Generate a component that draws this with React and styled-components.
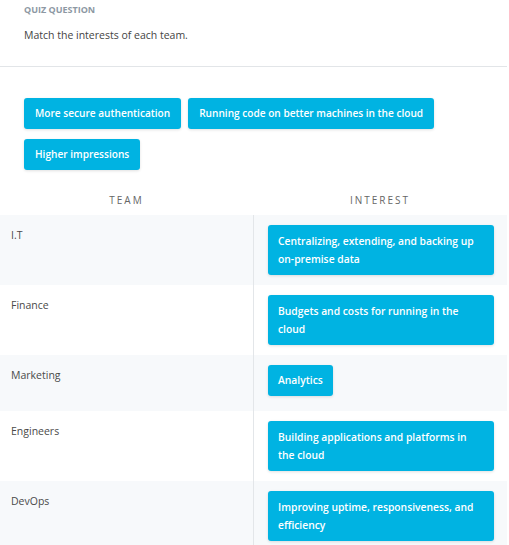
import React from 'react';
import styled, { createGlobalStyle } from 'styled-components';

const Global = createGlobalStyle`
  body {
    margin: 0;
    background: #fff;
    font-family: "Open Sans", "Noto Sans", sans-serif;
    color: #444;
  }
`;

const Page = styled.div`
  width: 507px;
`;

const Intro = styled.div`
  height: 67px;
  padding: 4px 24px 0;
  box-sizing: border-box;
  border-bottom: 1px solid #e2e5e8;
`;

const Label = styled.div`
  font-size: 9px;
  font-weight: 700;
  color: #8d98a3;
  line-height: 12px;
`;

const Question = styled.div`
  margin-top: 12px;
  font-size: 10.5px;
  line-height: 14px;
  color: #444;
`;

const Options = styled.div`
  display: flex;
  flex-wrap: wrap;
  gap: 10px 7px;
  padding: 31px 24px 0;
`;

const Chip = styled.div`
  background: #00b3e2;
  color: #fff;
  font-size: 10.1px;
  font-weight: 600;
  line-height: 19px;
  padding: 6px 11px;
  border-radius: 3px;
  box-shadow: 0 1px 3px rgba(0, 0, 0, 0.12);
`;

const HeadRow = styled.div`
  display: grid;
  grid-template-columns: 253px 1fr;
  margin-top: 15px;
  height: 30px;
  align-items: center;
`;

const HeadCell = styled.div`
  text-align: center;
  font-size: 10px;
  letter-spacing: 2px;
  color: #666;
`;

const Row = styled.div`
  display: grid;
  grid-template-columns: 253px 1fr;
  background: ${(p) => (p.$shaded ? '#f7f9fb' : '#fff')};
`;

const TeamCell = styled.div`
  padding: 11px 11px 10px;
  font-size: 10.5px;
  line-height: 18px;
  color: #4a4a4a;
`;

const Slot = styled.div`
  border-left: 1px solid #e3e6e9;
  padding: 10px 13px 10px 14px;
  min-height: 36px;
`;

const SlotChip = styled(Chip)`
  display: ${(p) => (p.$wide ? 'block' : 'inline-block')};
  font-size: 10.3px;
  line-height: 18px;
  padding: ${(p) => (p.$wide ? '7px 10px' : '6px 10px 7px')};
`;

const options = [
  'More secure authentication',
  'Running code on better machines in the cloud',
  'Higher impressions',
];

const rows = [
  { team: 'I.T', interest: 'Centralizing, extending, and backing up on-premise data' },
  { team: 'Finance', interest: 'Budgets and costs for running in the cloud' },
  { team: 'Marketing', interest: 'Analytics', short: true },
  { team: 'Engineers', interest: 'Building applications and platforms in the cloud' },
  { team: 'DevOps', interest: 'Improving uptime, responsiveness, and efficiency' },
];

export default function App() {
  return (
    <Page>
      <Global />
      <Intro>
        <Label>QUIZ QUESTION</Label>
        <Question>Match the interests of each team.</Question>
      </Intro>
      <Options>
        {options.map((o) => (
          <Chip key={o}>{o}</Chip>
        ))}
      </Options>
      <HeadRow>
        <HeadCell>TEAM</HeadCell>
        <HeadCell>INTEREST</HeadCell>
      </HeadRow>
      {rows.map((r, i) => (
        <Row key={r.team} $shaded={i % 2 === 0}>
          <TeamCell>{r.team}</TeamCell>
          <Slot>
            <SlotChip $wide={!r.short}>{r.interest}</SlotChip>
          </Slot>
        </Row>
      ))}
    </Page>
  );
}
